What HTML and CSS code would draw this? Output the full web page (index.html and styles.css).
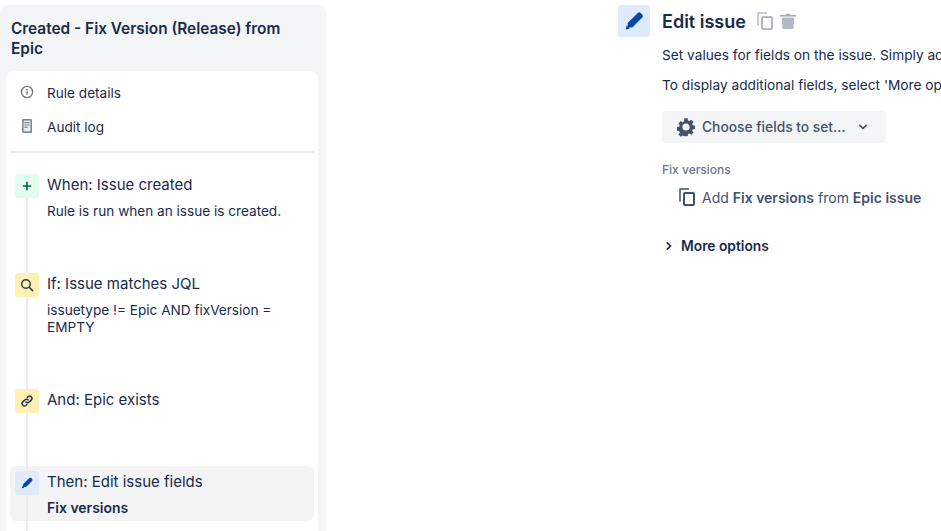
FILE: index.html
```html
<!DOCTYPE html>
<html lang="en">
<head>
<meta charset="utf-8">
<title>Edit issue</title>
<link rel="stylesheet" href="styles.css">
</head>
<body>
<div class="page">
  <aside class="sidebar">
    <h1 class="rule-title">Created - Fix Version (Release) from Epic</h1>
    <div class="card">
      <nav class="nav">
        <div class="nav-item">
          <svg class="nav-icon" viewBox="0 0 16 16"><circle cx="8" cy="8" r="5.6" fill="none" stroke="#6B778C" stroke-width="1.4"/><rect x="7.3" y="7.2" width="1.4" height="3.4" fill="#6B778C"/><rect x="7.3" y="5" width="1.4" height="1.4" fill="#6B778C"/></svg>
          <span class="nav-text">Rule details</span>
        </div>
        <div class="nav-item">
          <svg class="nav-icon" viewBox="0 0 16 16"><rect x="3" y="1" width="10" height="14" rx="1.200" fill="#7A869A"/><rect x="4.600" y="2.600" width="6.800" height="10.800" fill="#EBECF0"/><path d="M5.400 4h5.200v1.200H5.400zM5.400 6.400h5.200v1.200H5.400zM5.400 8.800h3.200V10H5.400z" fill="#7A869A"/></svg>
          <span class="nav-text">Audit log</span>
        </div>
      </nav>
      <div class="steps">
        <div class="step step-when">
          <span class="badge badge-green"><svg viewBox="0 0 16 16"><path d="M7.200 3.800h1.600v3.400h3.400v1.600H8.800v3.400H7.200V8.800H3.800V7.200h3.400z" fill="#006644"/></svg></span>
          <div class="step-body">
            <div class="step-title">When: Issue created</div>
            <div class="step-desc">Rule is run when an issue is created.</div>
          </div>
        </div>
        <div class="step step-if">
          <span class="badge badge-yellow"><svg viewBox="0 0 16 16"><circle cx="7" cy="7" r="4.300" fill="none" stroke="#253858" stroke-width="1.400"/><path d="M10.200 10.200l3.400 3.400" stroke="#253858" stroke-width="1.500" stroke-linecap="round"/></svg></span>
          <div class="step-body">
            <div class="step-title">If: Issue matches JQL</div>
            <div class="step-desc">issuetype != Epic AND fixVersion = EMPTY</div>
          </div>
        </div>
        <div class="step step-and">
          <span class="badge badge-yellow"><svg viewBox="0 0 16 16"><g fill="none" stroke="#253858" stroke-width="1.500" stroke-linecap="round"><path d="M6.900 9.100a2.300 2.300 0 0 0 3.300 0l2-2a2.300 2.300 0 0 0-3.300-3.300l-.7.700"/><path d="M9.100 6.900a2.300 2.300 0 0 0-3.300 0l-2 2a2.300 2.300 0 0 0 3.300 3.300l.7-.7"/></g></svg></span>
          <div class="step-body">
            <div class="step-title">And: Epic exists</div>
          </div>
        </div>
        <div class="step step-then">
          <span class="badge badge-blue"><svg viewBox="0 0 16 16"><path d="M10.300 3.100a1.300 1.300 0 0 1 1.800 0l1 1a1.300 1.300 0 0 1 0 1.800L7 12l-2.900-.2L4.100 9.200zM3.500 10.800l1.900 1.900-2.500.6z" fill="#0747A6"/></svg></span>
          <div class="step-body">
            <div class="step-title">Then: Edit issue fields</div>
            <div class="step-desc step-strong">Fix versions</div>
          </div>
        </div>
      </div>
    </div>
  </aside>
  <main class="panel">
    <span class="panel-badge"><svg viewBox="0 0 16 16"><path d="M10.300 3.100a1.300 1.300 0 0 1 1.800 0l1 1a1.300 1.300 0 0 1 0 1.800L7 12l-2.900-.2L4.100 9.200zM3.500 10.800l1.900 1.900-2.500.6z" fill="#0747A6"/></svg></span>
    <div class="panel-body">
      <div class="panel-head">
        <h2 class="panel-title">Edit issue</h2>
        <svg class="copy-icon" viewBox="0 0 16 18"><path d="M1 13.500V1h9" fill="none" stroke="#B3BAC5" stroke-width="1.500"/><rect x="5" y="5" width="10" height="12" rx="1" fill="none" stroke="#B3BAC5" stroke-width="2"/></svg>
        <svg class="trash-icon" viewBox="0 0 16 16"><path d="M0 2h5.500l.8-1.200h3.400l.8 1.200H16v1.600H0z" fill="#A5ADBA"/><path d="M1.500 4.600h13L13.400 16H2.600z" fill="#B3BAC5"/></svg>
      </div>
      <p class="intro">Set values for fields on the issue. Simply add the fields you want to edit.</p>
      <p class="intro">To display additional fields, select 'More options' below.</p>
      <button class="choose" type="button">
        <svg class="gear" viewBox="0 0 20 20"><path fill-rule="evenodd" fill="#42526E" d="M8.400 1.500h3.200l.4 2.300 1.300.6 2-1.300 2.200 2.300-1.300 1.900.5 1.300 2.300.4v3.200l-2.300.4-.5 1.300 1.300 2-2.200 2.200-2-1.300-1.300.5-.4 2.300H8.400L8 19.200l-1.300-.5-2 1.300-2.200-2.200 1.300-2-.5-1.300-2.300-.4V10.400l2.300-.4.500-1.300L2.500 6.700l2.200-2.300 2 1.300L8 4.100zM10 6.700a3.600 3.600 0 1 0 0 7.200 3.600 3.600 0 0 0 0-7.200z" transform="translate(0 -.3)"/></svg>
        <span>Choose fields to set...</span>
        <svg class="caret" viewBox="0 0 10 10"><path d="M1.800 3.300L5 6.300l3.200-3" fill="none" stroke="#42526E" stroke-width="1.600" stroke-linecap="round"/></svg>
      </button>
      <div class="field-label">Fix versions</div>
      <div class="field-value">
        <svg class="copy-icon" viewBox="0 0 16 18"><path d="M1 13.500V1h9" fill="none" stroke="#42526E" stroke-width="1.500"/><rect x="5" y="5" width="10" height="12" rx="1" fill="none" stroke="#42526E" stroke-width="2"/></svg>
        <span>Add <b>Fix versions</b> from <b>Epic issue</b></span>
      </div>
      <div class="more">
        <svg class="more-caret" viewBox="0 0 10 10"><path d="M3.300 1.800L6.500 5 3.300 8.200" fill="none" stroke="#172B4D" stroke-width="1.700" stroke-linecap="round"/></svg>
        <span>More options</span>
      </div>
    </div>
  </main>
</div>
</body>
</html>
```
FILE: styles.css
```css
* { box-sizing: border-box; }
html, body { margin: 0; height: 100%; overflow: hidden; background: #fff; }
body { font-family: Inter, "Liberation Sans", sans-serif; color: #172B4D; font-size: 14px; }
.page { display: flex; height: 531px; width: 941px; overflow: hidden; }

.sidebar { width: 326px; flex: none; margin-top: 5px; padding: 0 8px 0 6px; background: #F4F5F7; border-radius: 8px 8px 0 0; }
.rule-title { margin: 0; padding: 14px 5px 0; font-size: 15.4px; line-height: 20px; font-weight: 600; color: #172B4D; height: 66px; }
.card { background: #fff; border-radius: 8px 8px 0 0; height: 470px; padding: 0 4px; }

.nav { padding: 4px 0 8px; border-bottom: 2px solid #EBECF0; }
.nav-item { display: flex; align-items: center; gap: 12px; height: 34px; padding-left: 9px; font-size: 13.6px; color: #172B4D; }
.nav-text { padding-top: 2px; }
.nav-icon { width: 16px; height: 16px; flex: none; }

.steps { position: relative; padding-top: 21px; }
.steps::before { content: ""; position: absolute; z-index: 1; left: 16px; top: 30px; bottom: -30px; width: 2px; background: #EBECF0; }
.step { display: flex; gap: 8px; padding-left: 5px; border-radius: 6px; }
.step-when { height: 99px; }
.step-if { height: 116px; }
.step-and { height: 62px; margin-bottom: 15px; }
.step-then { height: 55px; padding-top: 5px; background: #F4F4F4; }
.badge { position: relative; z-index: 2; width: 24px; height: 24px; flex: none; border-radius: 3px; display: flex; align-items: center; justify-content: center; }
.badge svg { width: 16px; height: 16px; }
.badge-green { background: #E3FCEF; }
.badge-yellow { background: #FFF0B3; }
.badge-blue { background: #DEEBFF; }
.step-body { padding-top: 1px; }
.step-title { font-size: 15px; line-height: 20px; color: #172B4D; }
.step-desc { margin-top: 8px; font-size: 13.6px; line-height: 17px; color: #172B4D; }
.step-strong { margin-top: 7px; font-size: 14px; font-weight: 600; }

.panel { flex: none; margin-left: 292px; display: flex; gap: 12px; padding-top: 5px; width: 323px; }
.panel-badge { width: 32px; height: 32px; flex: none; background: #DEEBFF; border-radius: 3px; display: flex; align-items: center; justify-content: center; }
.panel-badge svg { width: 26px; height: 26px; }
.panel-body { width: 600px; flex: none; }
.panel-head { display: flex; align-items: center; gap: 7px; height: 32px; }
.panel-title { margin: 0 4px 0 0; padding-top: 1px; font-size: 18px; font-weight: 600; line-height: 32px; color: #172B4D; }
.copy-icon { width: 16px; height: 18px; flex: none; }
.trash-icon { width: 16px; height: 16px; flex: none; }
.intro { margin: 8px 0 0; font-size: 13.7px; line-height: 20px; color: #172B4D; white-space: nowrap; }
.intro + .intro { margin-top: 10px; }
.choose { display: flex; align-items: center; width: 224px; height: 32px; margin-top: 16px; padding: 0 0 0 14px; border: 0; border-radius: 3px; background: #F4F5F7; font: 500 13.8px Inter, "Liberation Sans", sans-serif; color: #42526E; }
.gear { width: 20px; height: 20px; margin-right: 6px; flex: none; }
.caret { width: 10px; height: 10px; margin-left: 12px; flex: none; }
.field-label { margin-top: 20px; font-size: 12px; line-height: 14px; font-weight: 500; color: #6B778C; }
.field-value { display: flex; align-items: center; gap: 7px; margin-top: 9px; padding-left: 17px; height: 22px; font-size: 14px; color: #42526E; }
.field-value b { font-weight: 600; }
.more { display: flex; align-items: center; gap: 7px; margin-top: 28px; padding-left: 2px; height: 20px; font-size: 13.8px; font-weight: 600; color: #172B4D; }
.more-caret { width: 10px; height: 10px; flex: none; }
```
